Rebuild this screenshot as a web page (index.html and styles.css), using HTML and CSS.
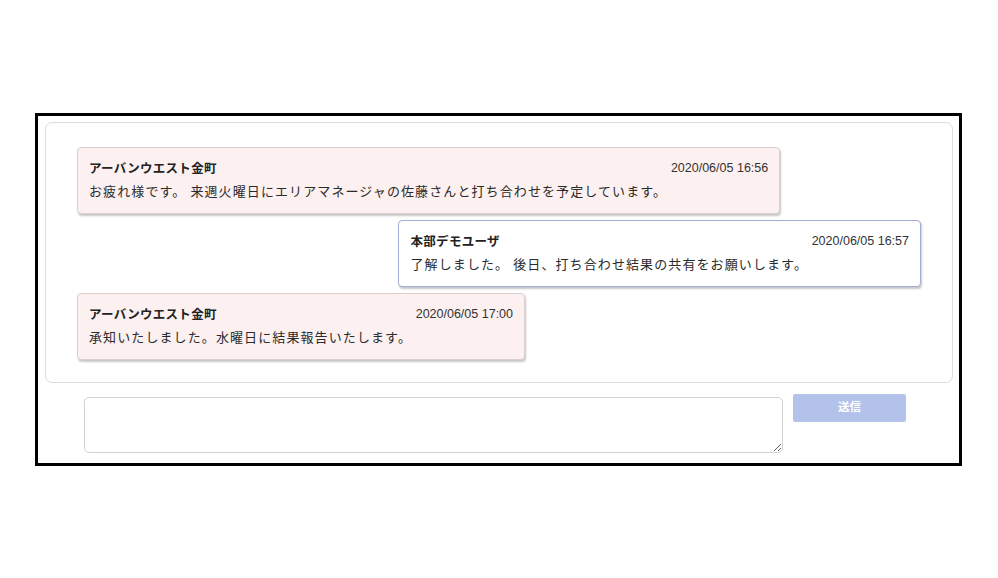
FILE: index.html
```html
<!DOCTYPE html>
<html lang="ja">
<head>
<meta charset="utf-8">
<title>チャット</title>
<link rel="stylesheet" href="styles.css">
</head>
<body>
<div class="frame">
  <div class="panel">
    <div class="msg msg-other">
      <div class="msg-head">
        <span class="msg-name">アーバンウエスト金町</span>
        <span class="msg-time">2020/06/05 16:56</span>
      </div>
      <div class="msg-body">お疲れ様です。 来週火曜日にエリアマネージャの佐藤さんと打ち合わせを予定しています。</div>
    </div>
    <div class="msg msg-self">
      <div class="msg-head">
        <span class="msg-name">本部デモユーザ</span>
        <span class="msg-time">2020/06/05 16:57</span>
      </div>
      <div class="msg-body">了解しました。 後日、打ち合わせ結果の共有をお願いします。</div>
    </div>
    <div class="msg msg-other">
      <div class="msg-head">
        <span class="msg-name">アーバンウエスト金町</span>
        <span class="msg-time">2020/06/05 17:00</span>
      </div>
      <div class="msg-body">承知いたしました。水曜日に結果報告いたします。</div>
    </div>
  </div>
  <div class="composer">
    <textarea class="input"></textarea>
    <button class="send" disabled>送信</button>
  </div>
</div>
</body>
</html>
```
FILE: styles.css
```css
html, body {
  margin: 0;
  padding: 0;
  background: #ffffff;
}
body {
  font-family: "Noto Sans CJK JP", "Liberation Sans", sans-serif;
  color: #333333;
}
.frame {
  box-sizing: border-box;
  margin: 113px 0 0 35px;
  width: 927px;
  height: 353px;
  border: 3px solid #000000;
  padding: 6px 6px 10px 7px;
}
.panel {
  box-sizing: border-box;
  height: 261px;
  border: 1px solid #dcdcdc;
  border-radius: 7px;
  padding: 24px 31px 0 31px;
  display: flex;
  flex-direction: column;
  gap: 6px;
}
.msg {
  box-sizing: border-box;
  width: fit-content;
  height: 67px;
  padding: 8px 11px 0 11px;
  border-radius: 4px;
  box-shadow: 1px 2px 2px rgba(0, 0, 0, 0.22);
}
.msg-other {
  background: #fdf0f0;
  border: 1px solid #dccfcf;
}
.msg-self {
  align-self: flex-end;
  background: #ffffff;
  border: 1px solid #a4acd8;
}
.msg-head {
  display: flex;
  justify-content: space-between;
  align-items: center;
  height: 23px;
}
.msg-name {
  font-size: 12.5px;
  font-weight: bold;
  color: #222222;
  letter-spacing: 0.3px;
}
.msg-time {
  font-family: "Liberation Sans", "Noto Sans", sans-serif;
  font-size: 12.5px;
  color: #333333;
}
.msg-body {
  font-size: 13px;
  line-height: 23px;
  letter-spacing: 1.1px;
  padding-right: 101px;
  white-space: nowrap;
  color: #2b2b2b;
}
.composer {
  display: flex;
  align-items: flex-start;
  margin-top: 11px;
  padding-left: 39px;
}
.input {
  box-sizing: border-box;
  width: 699px;
  height: 56px;
  margin: 3px 0 0 0;
  border: 1px solid #d2d2d2;
  border-radius: 5px;
  resize: vertical;
  font-family: inherit;
}
.send {
  box-sizing: border-box;
  width: 113px;
  height: 28px;
  margin-left: 10px;
  border: none;
  border-radius: 2px;
  background: #b3c2ea;
  color: #ffffff;
  font-family: "Noto Sans CJK JP", sans-serif;
  font-weight: bold;
  font-size: 11.5px;
  padding: 0 0 4px 0;
}
```
